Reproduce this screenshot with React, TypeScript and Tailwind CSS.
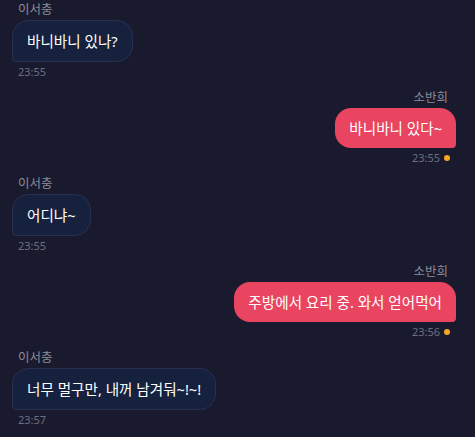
import React from "react";

type Message = {
  id: number;
  sender: string;
  text: string;
  time: string;
  mine: boolean;
};

const messages: Message[] = [
  { id: 1, sender: "이서충", text: "바니바니 있나?", time: "23:55", mine: false },
  { id: 2, sender: "소반희", text: "바니바니 있다~", time: "23:55", mine: true },
  { id: 3, sender: "이서충", text: "어디냐~", time: "23:55", mine: false },
  { id: 4, sender: "소반희", text: "주방에서 요리 중. 와서 얻어먹어", time: "23:56", mine: true },
  { id: 5, sender: "이서충", text: "너무 멀구만, 내꺼 남겨둬~!~!", time: "23:57", mine: false },
];

function Bubble({ msg }: { msg: Message }) {
  if (msg.mine) {
    return (
      <div className="flex flex-col items-end">
        <div className="px-2 text-[12.5px] leading-4 text-[#8b8b99]">{msg.sender}</div>
        <div className="mt-0.5 rounded-2xl rounded-br-sm bg-[#e94560] px-3.5 py-2.5 text-[14.6px] leading-5 text-white">
          {msg.text}
        </div>
        <div className="mt-0.5 flex items-center gap-1 px-1.5 text-[11px] leading-4 text-[#6e6e80]">
          <span>{msg.time}</span>
          <span className="h-1.5 w-1.5 rounded-full bg-[#f5a623]" />
        </div>
      </div>
    );
  }

  return (
    <div className="flex flex-col items-start">
      <div className="px-1.5 text-[12.5px] leading-4 text-[#8b8b99]">{msg.sender}</div>
      <div className="mt-0.5 rounded-2xl rounded-bl-sm border border-[#2a2f52] bg-[#16213e] px-3.5 py-2.5 text-[14.6px] leading-5 text-white">
        {msg.text}
      </div>
      <div className="mt-0.5 px-1.5 text-[11px] leading-4 text-[#6e6e80]">{msg.time}</div>
    </div>
  );
}

export default function App() {
  return (
    <div
      className="flex h-[437px] flex-col gap-2.5 overflow-hidden bg-[#1a1a2e] pl-3 pr-[19px] pt-0.5"
      style={{ fontFamily: '"Noto Sans", "Noto Sans CJK KR", sans-serif' }}
    >
      {messages.map((m) => (
        <Bubble key={m.id} msg={m} />
      ))}
    </div>
  );
}
